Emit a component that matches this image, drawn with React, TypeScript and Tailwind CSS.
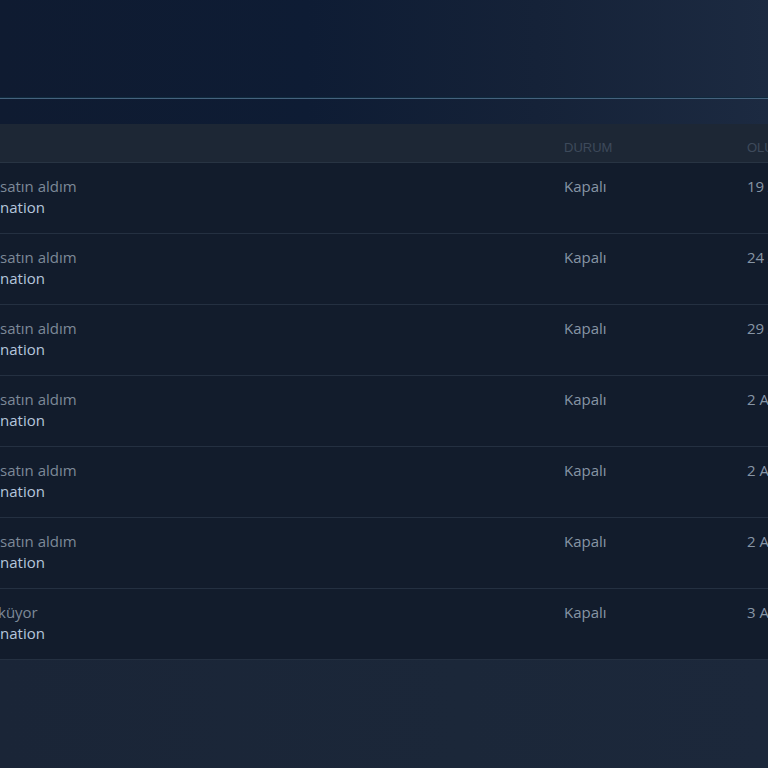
import React from "react";

const rows = [
  { a: "satın aldım", d: "19 Ağustos 2023" },
  { a: "satın aldım", d: "24 Ağustos 2023" },
  { a: "satın aldım", d: "29 Ağustos 2023" },
  { a: "satın aldım", d: "2 Ağustos 2023" },
  { a: "satın aldım", d: "2 Ağustos 2023" },
  { a: "satın aldım", d: "2 Ağustos 2023" },
  { a: "küyor", d: "3 Ağustos 2023", k: true },
];

export default function App() {
  return (
    <div
      className="w-[768px] h-[768px] overflow-hidden flex flex-col bg-[linear-gradient(90deg,#0f1b31_0%,#0e1c34_40%,#152238_70%,#1c2a41_100%)]"
      style={{ fontFamily: '"Open Sans", "Liberation Sans", Arial, sans-serif' }}
    >
      <div className="h-[97px] shrink-0" />
      <div className="h-[1px] shrink-0 bg-[#0f2a3e]" />
      <div className="h-[1px] shrink-0 bg-[#45627d]" />
      <div className="h-[25px] shrink-0" />
      <div
        className="shrink-0 bg-[#1d2735] h-[39px] border-b border-[#283443] flex text-[13px] leading-[16px] uppercase text-[#3d4a5b] pt-[16px]"
        style={{ fontFamily: '"Liberation Sans", Arial, sans-serif' }}
      >
        <div className="w-[564px] shrink-0" />
        <div className="w-[183px] shrink-0">Durum</div>
        <div className="flex-1 whitespace-nowrap overflow-hidden">Oluşturulma</div>
      </div>
      <div className="shrink-0 bg-[#121c2c]">
        {rows.map((r, i) => (
          <div
            key={i}
            className="flex border-b border-[#243041] pt-[13px] pb-[15px] text-[15px] leading-[21px]"
          >
            <div className="w-[564px] shrink-0 overflow-hidden">
              <div className={r.k ? "text-[#7d8998] -ml-[2px] whitespace-nowrap" : "text-[#7d8998] whitespace-nowrap"}>
                {r.a}
              </div>
              <div className="text-[#b5c6dc] whitespace-nowrap">nation</div>
            </div>
            <div className="w-[183px] shrink-0 text-[#8795a5]">Kapalı</div>
            <div className="flex-1 whitespace-nowrap overflow-hidden text-[#8795a5]">{r.d}</div>
          </div>
        ))}
      </div>
      <div className="flex-1 bg-[linear-gradient(90deg,#1a2537_0%,#1b2739_60%,#1c283b_100%)]" />
    </div>
  );
}
